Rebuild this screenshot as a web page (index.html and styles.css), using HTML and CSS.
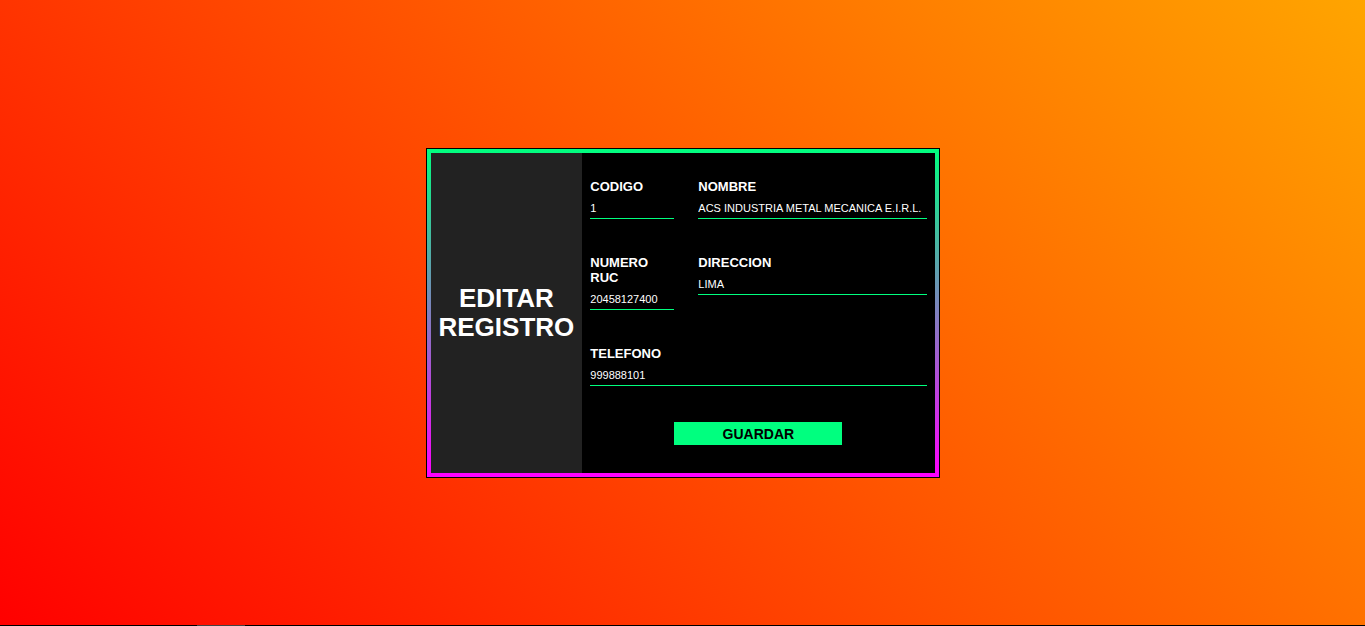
FILE: index.html
```html
<!DOCTYPE html>
<html lang="es">
<head>
<meta charset="utf-8">
<meta name="viewport" content="width=device-width, initial-scale=1">
<title>Editar registro</title>
<link rel="stylesheet" href="styles.css">
</head>
<body>
<main class="card">
  <div class="panel">
    <header class="side">
      <h1 class="title">EDITAR REGISTRO</h1>
    </header>
    <form class="form">
      <div class="field">
        <label class="label" for="codigo">CODIGO</label>
        <input class="input" id="codigo" type="text" value="1">
      </div>
      <div class="field">
        <label class="label" for="nombre">NOMBRE</label>
        <input class="input" id="nombre" type="text" value="ACS INDUSTRIA METAL MECANICA E.I.R.L.">
      </div>
      <div class="field">
        <label class="label" for="ruc">NUMERO RUC</label>
        <input class="input" id="ruc" type="text" value="20458127400">
      </div>
      <div class="field">
        <label class="label" for="direccion">DIRECCION</label>
        <input class="input" id="direccion" type="text" value="LIMA">
      </div>
      <div class="field field-wide">
        <label class="label" for="telefono">TELEFONO</label>
        <input class="input" id="telefono" type="text" value="999888101">
      </div>
      <button class="save" type="submit">GUARDAR</button>
    </form>
  </div>
</main>
<div class="edge"></div>
</body>
</html>
```
FILE: styles.css
```css
* {
  box-sizing: border-box;
}

body {
  margin: 0;
  min-height: 100vh;
  display: flex;
  align-items: center;
  justify-content: center;
  font-family: "Liberation Sans", Arial, sans-serif;
  background: linear-gradient(45deg, red, orange);
}

.card {
  width: 100%;
  max-width: 514px;
  padding: 4px;
  border: 1px solid #000;
  background: linear-gradient(springgreen, magenta);
}

.panel {
  display: grid;
  grid-template-columns: 3fr 7fr;
  background: #000;
}

.side {
  display: flex;
  align-items: center;
  justify-content: center;
  padding: 0 8px;
  background: #222;
}

.title {
  margin: 0;
  color: #fff;
  font-size: 26px;
  line-height: 29px;
  text-align: center;
}

.form {
  display: grid;
  grid-template-columns: 25% 1fr;
  align-items: start;
  gap: 36px 24px;
  padding: 26px 8px 28px;
}

.field {
  display: flex;
  flex-direction: column;
}

.field-wide {
  grid-column: 1 / -1;
}

.label {
  color: #fff;
  font-size: 13px;
  font-weight: bold;
  line-height: 15px;
}

.input {
  width: 100%;
  height: 25px;
  padding: 7px 0 3px;
  border: 0;
  border-bottom: 1px solid springgreen;
  outline: 0;
  background: transparent;
  color: #fff;
  font-family: inherit;
  font-size: 11px;
}

.save {
  grid-column: 1 / -1;
  justify-self: center;
  width: 50%;
  height: 23px;
  padding: 0;
  border: 0;
  background: springgreen;
  color: #000;
  font-family: inherit;
  font-size: 14px;
  font-weight: bold;
}

.edge {
  position: fixed;
  right: 0;
  bottom: 0;
  left: 0;
  height: 1px;
  background: linear-gradient(90deg, #000 197px, #444 197px, #444 245px, #000 245px);
}
```
